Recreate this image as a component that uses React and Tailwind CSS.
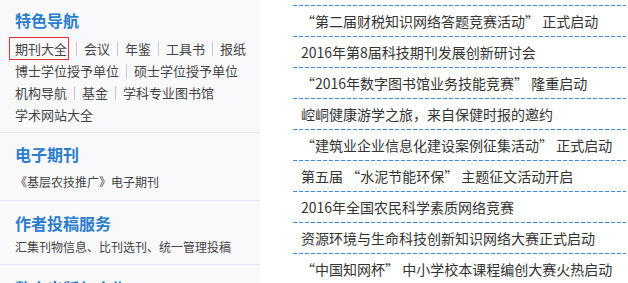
import React from "react";

const font = { fontFamily: '"Noto Sans CJK SC", "Liberation Sans", sans-serif' };

const navRows = [
  ["期刊大全", "会议", "年鉴", "工具书", "报纸"],
  ["博士学位授予单位", "硕士学位授予单位"],
  ["机构导航", "基金", "学科专业图书馆"],
  ["学术网站大全"],
];

const news = [
  "“第二届财税知识网络答题竞赛活动” 正式启动",
  "2016年第8届科技期刊发展创新研讨会",
  "“2016年数字图书馆业务技能竞赛” 隆重启动",
  "崆峒健康游学之旅，来自保健时报的邀约",
  "“建筑业企业信息化建设案例征集活动” 正式启动",
  "第五届 “水泥节能环保” 主题征文活动开启",
  "2016年全国农民科学素质网络竞赛",
  "资源环境与生命科技创新知识网络大赛正式启动",
  "“中国知网杯” 中小学校本课程编创大赛火热启动",
];

function Heading({ children }) {
  return (
    <h2 className="text-[16px] leading-[20px] font-bold text-[#2b7dcb]">{children}</h2>
  );
}

function Sep() {
  return <span className="inline-block w-px h-[14px] bg-[#c9c9c9] mx-[7px] align-[-2px]" />;
}

export default function App() {
  return (
    <div className="w-[628px] h-[283px] overflow-hidden bg-white flex" style={font}>
      <aside className="w-[260px] shrink-0 bg-[#f9f9fc] h-full">
        <section className="pt-[10px] pl-[15px] pb-[6px] border-b border-[#e6e6fa]">
          <Heading>特色导航</Heading>
          <div className="mt-[7px] text-[13px] leading-[22px] text-[#444]">
            {navRows.map((row, i) => (
              <div key={i} className="whitespace-nowrap">
                {row.map((item, j) => (
                  <React.Fragment key={item}>
                    {j > 0 && <Sep />}
                    {i === 0 && j === 0 ? (
                      <span className="inline-block border border-[#e0322f] ml-[-6px] pl-[5px] pr-[1px] leading-[21px]">
                        {item}
                      </span>
                    ) : (
                      <span>{item}</span>
                    )}
                  </React.Fragment>
                ))}
              </div>
            ))}
          </div>
        </section>
        <section className="pt-[11px] pl-[15px] pb-[7px] border-b border-[#e6e6fa]">
          <Heading>电子期刊</Heading>
          <p className="mt-[7px] text-[12px] leading-[22px] text-[#444]">《基层农技推广》电子期刊</p>
        </section>
        <section className="pt-[12px] pl-[15px] pb-[6px] border-b border-[#e6e6fa]">
          <Heading>作者投稿服务</Heading>
          <p className="mt-[3px] text-[12px] leading-[22px] text-[#444]">汇集刊物信息、比刊选刊、统一管理投稿</p>
        </section>
        <section className="pt-[13px] pl-[15px]">
          <Heading>数字出版与合作</Heading>
        </section>
      </aside>
      <div className="ml-[33px] w-[333px] pt-[5px]">
        <ul>
          {news.map((n) => (
            <li key={n}>
              <div className="h-px bg-[repeating-linear-gradient(90deg,#3b8de6_0_4px,transparent_4px_6px)]" />
              <div className="h-[30px] leading-[30px] pl-[8px] text-[14px] text-[#333] whitespace-nowrap">
                {n}
              </div>
            </li>
          ))}
          <li>
            <div className="h-px bg-[repeating-linear-gradient(90deg,#3b8de6_0_4px,transparent_4px_6px)]" />
          </li>
        </ul>
      </div>
    </div>
  );
}
